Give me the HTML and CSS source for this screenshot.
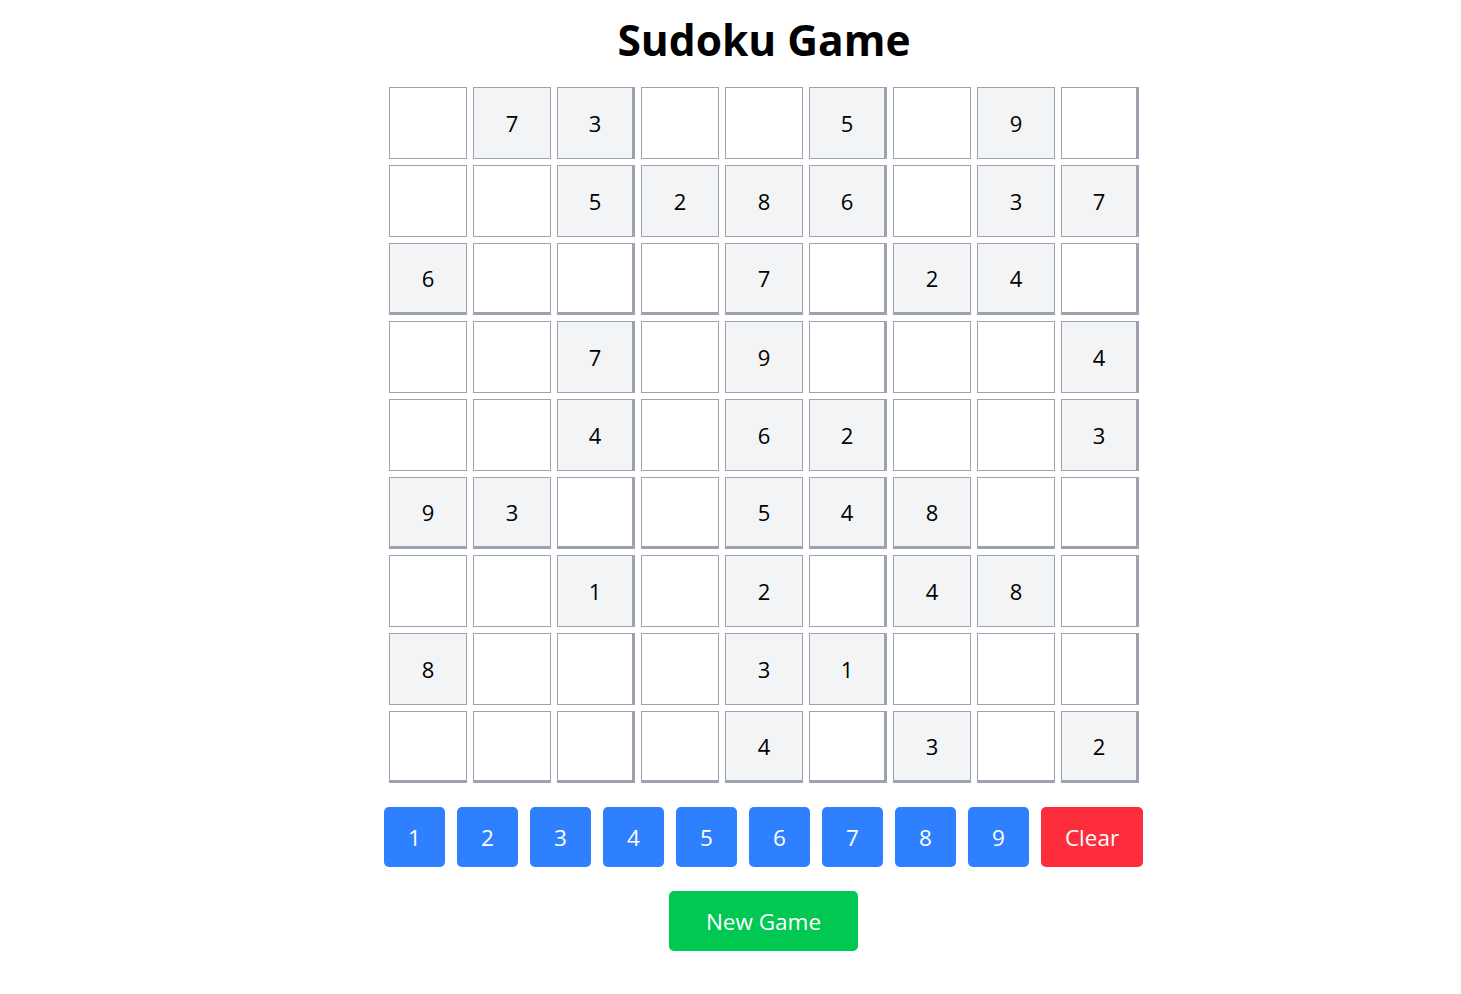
FILE: index.html
```html
<!DOCTYPE html>
<html lang="en">
<head>
<meta charset="utf-8">
<title>Sudoku Game</title>
<link rel="stylesheet" href="styles.css">
</head>
<body>
<div class="app">
  <h1 class="title">Sudoku Game</h1>
  <div class="board">
    <div class="cell"></div><div class="cell given">7</div><div class="cell given box-r">3</div><div class="cell"></div><div class="cell"></div><div class="cell given box-r">5</div><div class="cell"></div><div class="cell given">9</div><div class="cell box-r"></div>
    <div class="cell"></div><div class="cell"></div><div class="cell given box-r">5</div><div class="cell given">2</div><div class="cell given">8</div><div class="cell given box-r">6</div><div class="cell"></div><div class="cell given">3</div><div class="cell given box-r">7</div>
    <div class="cell given box-b">6</div><div class="cell box-b"></div><div class="cell box-b box-r"></div><div class="cell box-b"></div><div class="cell given box-b">7</div><div class="cell box-b box-r"></div><div class="cell given box-b">2</div><div class="cell given box-b">4</div><div class="cell box-b box-r"></div>
    <div class="cell"></div><div class="cell"></div><div class="cell given box-r">7</div><div class="cell"></div><div class="cell given">9</div><div class="cell box-r"></div><div class="cell"></div><div class="cell"></div><div class="cell given box-r">4</div>
    <div class="cell"></div><div class="cell"></div><div class="cell given box-r">4</div><div class="cell"></div><div class="cell given">6</div><div class="cell given box-r">2</div><div class="cell"></div><div class="cell"></div><div class="cell given box-r">3</div>
    <div class="cell given box-b">9</div><div class="cell given box-b">3</div><div class="cell box-b box-r"></div><div class="cell box-b"></div><div class="cell given box-b">5</div><div class="cell given box-b box-r">4</div><div class="cell given box-b">8</div><div class="cell box-b"></div><div class="cell box-b box-r"></div>
    <div class="cell"></div><div class="cell"></div><div class="cell given box-r">1</div><div class="cell"></div><div class="cell given">2</div><div class="cell box-r"></div><div class="cell given">4</div><div class="cell given">8</div><div class="cell box-r"></div>
    <div class="cell given">8</div><div class="cell"></div><div class="cell box-r"></div><div class="cell"></div><div class="cell given">3</div><div class="cell given box-r">1</div><div class="cell"></div><div class="cell"></div><div class="cell box-r"></div>
    <div class="cell box-b"></div><div class="cell box-b"></div><div class="cell box-b box-r"></div><div class="cell box-b"></div><div class="cell given box-b">4</div><div class="cell box-b box-r"></div><div class="cell given box-b">3</div><div class="cell box-b"></div><div class="cell given box-b box-r">2</div>
  </div>
  <div class="pad">
    <button class="btn num">1</button>
    <button class="btn num">2</button>
    <button class="btn num">3</button>
    <button class="btn num">4</button>
    <button class="btn num">5</button>
    <button class="btn num">6</button>
    <button class="btn num">7</button>
    <button class="btn num">8</button>
    <button class="btn num">9</button>
    <button class="btn clear">Clear</button>
  </div>
  <button class="btn new-game">New Game</button>
</div>
</body>
</html>
```
FILE: styles.css
```css
* { box-sizing: border-box; }

html, body {
  margin: 0;
  padding: 0;
  background: #ffffff;
}

body {
  font-family: "Open Sans", "Noto Sans", "Liberation Sans", sans-serif;
  color: #000000;
}

.app {
  display: flex;
  flex-direction: column;
  align-items: center;
  padding-left: 67px;
}

.title {
  font-size: 42.5px;
  line-height: 48px;
  font-weight: 700;
  margin: 16px 0 23px;
}

.board {
  display: grid;
  grid-template-columns: repeat(9, 78px);
  grid-auto-rows: 72px;
  gap: 6px;
}

.cell {
  display: flex;
  align-items: center;
  justify-content: center;
  border: 1px solid #9ca3af;
  background: #ffffff;
  font-size: 22px;
}

.cell.given { background: #f3f4f6; }
.cell.box-r { border-right-width: 3px; }
.cell.box-b { border-bottom-width: 3px; }

.pad {
  display: flex;
  gap: 12px;
  margin-top: 24px;
  margin-right: 1px;
}

.btn {
  border: none;
  border-radius: 5px;
  color: #ffffff;
  font-family: inherit;
  font-size: 22.5px;
  height: 60px;
  padding: 0;
  cursor: pointer;
}

.num { width: 61px; background: #2f80ff; }
.clear { width: 102px; background: #fd2d3c; }
.new-game {
  width: 189px;
  margin-top: 24px;
  margin-right: 1px;
  background: #00c853;
}
```
